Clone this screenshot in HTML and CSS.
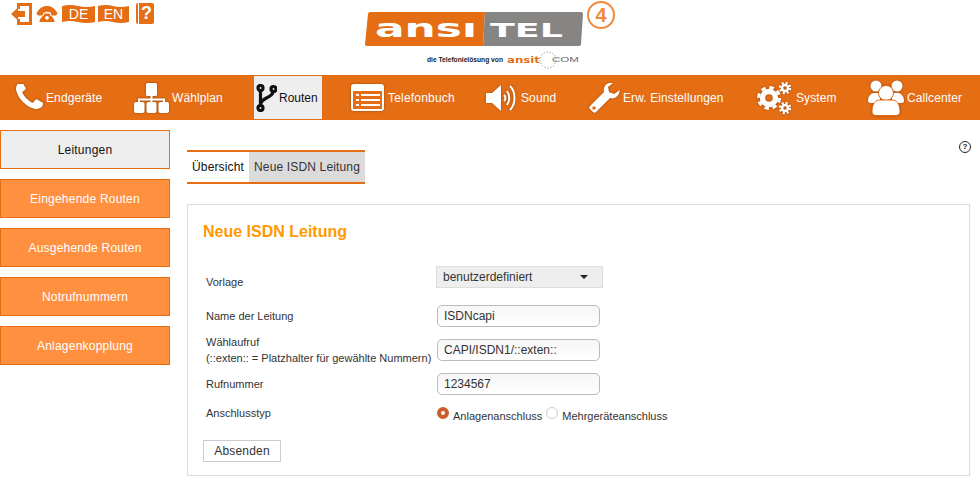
FILE: index.html
```html
<!DOCTYPE html>
<html>
<head>
    <meta charset="utf-8">
    <title>Neue ISDN Leitung</title>
    <link rel="stylesheet" href="styles.css">
</head>
<body>
    <div class="header">
        <div class="quick">
            <svg class="q-exit" viewBox="0 0 21 22"><path d="M6 0h15v22H6v-6h3v3h9V3H9v3H6z"/><path d="M0 11l7-6.500V8h7v6H7v3.500z"/></svg>
            <svg class="q-phone" viewBox="0 0 22 17"><path d="M0 7.500C2.500 2.500 6.500 0 11 0s8.500 2.500 11 7.500c0 1.500-1 2.500-2 2.500h-3.500c-1 0-1.500-1-1.500-3-1-.5-2.500-.8-4-.8S8 7 7 7.500c0 1.500-.5 2.500-1.500 2.500H2C1 10 0 9 0 7.500z"/><path d="M3 17c0-3 2-5.500 5-7.500V8h6v1.500c3 2 5 4.500 5 7.500z"/><circle cx="11" cy="12.500" r="2" fill="#fff"/></svg>
            <span class="flag">DE</span>
            <span class="flag flag-en">EN</span>
            <span class="q-help">?</span>
        </div>
        <svg class="logo" width="255" height="70" viewBox="0 0 255 70">
            <defs><clipPath id="nodot"><rect x="0" y="23" width="120" height="20"/></clipPath></defs>
            <path d="M5 12h115l-2 34H2c-1.500 0-2-1-2-2L3 14c0-1 1-2 2-2z" fill="#e56d14"/>
            <path d="M120 12h96c1.500 0 2 1 2 2l-2 30c0 1-1 2-2 2h-96z" fill="#868584"/>
            <text class="logo-big" x="10" y="37" textLength="102" lengthAdjust="spacingAndGlyphs" clip-path="url(#nodot)">ansi</text>
            <text class="logo-tel" x="125" y="37" textLength="73" lengthAdjust="spacingAndGlyphs">TEL</text>
            <circle cx="236" cy="15" r="13" fill="#fff" stroke="#f08a3c" stroke-width="2"/>
            <text class="logo-four" x="236" y="22" text-anchor="middle">4</text>
            <text class="logo-tag" x="62" y="62" textLength="76" lengthAdjust="spacingAndGlyphs">die Telefonielösung von</text>
            <text class="logo-ansit" x="142" y="63" textLength="33" lengthAdjust="spacingAndGlyphs">ansit</text>
            <text class="logo-com" x="187" y="62" textLength="27" lengthAdjust="spacingAndGlyphs">COM</text>
            <circle cx="183" cy="60" r="8" class="logo-ring"/>
        </svg>
    </div>

    <div class="nav">
        <a class="nav-item">
            <svg class="ico" width="27" height="28" viewBox="192 256 1408 1408"><path d="M1600 1240q0 27-10 70.5t-21 68.5q-21 50-122 106-94 51-186 51-27 0-53-3.5t-57.5-12.5-47-14.5-55.5-20.5-49-18q-98-35-175-83-127-79-264-216t-216-264q-48-77-83-175-3-9-18-49t-20.5-55.5-14.5-47-12.5-57.5-3.5-53q0-92 51-186 56-101 106-122 25-11 68.5-21t70.5-10q14 0 21 3 18 6 53 76 11 19 30 54t35 63.5 31 53.5q3 4 17.5 25t21.5 35.5 7 28.5q0 20-28.5 50t-62 55-62 53-28.5 46q0 9 5 22.5t8.5 20.5 14 24 11.5 19q76 137 174 235t235 174q2 1 19 11.5t24 14 20.5 8.5 22.5 5q18 0 46-28.5t53-62 55-62 50-28.5q14 0 28.5 7t35.5 21.5 25 17.5q25 15 53.5 31t63.5 35 54 30q70 35 76 53 3 7 3 21z"/></svg>
            Endgeräte
        </a>
        <a class="nav-item">
            <svg class="ico" width="35" height="30" viewBox="0 0 35 30"><rect x="12" y="0" width="11" height="13" rx="1.500"/><rect x="0" y="19" width="10.500" height="11" rx="2"/><rect x="12.500" y="19" width="10" height="11" rx="2"/><rect x="24.500" y="19" width="10.500" height="11" rx="2"/><path d="M16.500 13h2v2.500H31V19h-2v-1.500H18.500V19h-2v-1.500H6V19H4v-3.500h12.500z"/></svg>
            Wählplan
        </a>
        <a class="nav-item active">
            <svg class="ico ico-line" width="21" height="28" viewBox="0 0 21 28"><circle cx="4.500" cy="4" r="2.500"/><circle cx="17.500" cy="5" r="2.500"/><circle cx="4.500" cy="24" r="2.500"/><path d="M4.500 6.500v15M17 7.500c0 6.500-11.500 5.500-12.500 13"/></svg>
            Routen
        </a>
        <a class="nav-item wide-text">
            <svg class="ico ico-book" width="33" height="27" viewBox="0 0 33 27"><rect width="33" height="27" rx="3"/><rect x="2" y="7" width="29" height="18" fill="#e56d14"/><rect x="5" y="10" width="3" height="2"/><rect x="5" y="15" width="3" height="2"/><rect x="5" y="20" width="3" height="2"/><rect x="10" y="10" width="19" height="2"/><rect x="10" y="15" width="19" height="2"/><rect x="10" y="20" width="19" height="2"/></svg>
            Telefonbuch
        </a>
        <a class="nav-item">
            <svg class="ico" width="32" height="28" viewBox="0 0 32 28"><path d="M0 9h6l9-8v26l-9-8H0z"/><g fill="none" stroke="#fff" stroke-width="2"><path d="M18 11c2 2 2 4 0 6"/><path d="M21 7c3 4 3 10 0 14"/><path d="M24 2c6 6 6 18 0 24"/></g></svg>
            Sound
        </a>
        <a class="nav-item">
            <svg class="ico" width="31" height="32" viewBox="0 0 31 32"><path d="M20 1c-4 1-6 5-5 9L1 24c-1 1-1 2 0 3l3 3c1 1 2 1 3 0l14-14c4 1 8-1 9-5l1-3-6 4-5-2-1-5 5-4z"/><circle cx="5" cy="26" r="1.800" fill="#e56d14"/></svg>
            Erw. Einstellungen
        </a>
        <a class="nav-item">
            <svg class="ico ico-gears" width="36" height="34" viewBox="0 0 36 34"><circle cx="12" cy="17" r="6.500" stroke-width="5.500"/><circle cx="12" cy="17" r="10.500" stroke-width="3" stroke-dasharray="4.500 3.750"/><circle cx="28" cy="7" r="3" stroke-width="2.500"/><circle cx="28" cy="7" r="5" stroke-width="2.500" stroke-dasharray="2 1.930"/><circle cx="28" cy="27" r="3" stroke-width="2.500"/><circle cx="28" cy="27" r="5" stroke-width="2.500" stroke-dasharray="2 1.930"/></svg>
            System
        </a>
        <a class="nav-item">
            <svg class="ico" width="36" height="36" viewBox="0 0 36 36"><circle cx="8" cy="6" r="5.500"/><circle cx="29" cy="6" r="5.500"/><path d="M0 21c0-5 3-8 6-8h6v10H3c-2 0-3-1-3-2z"/><path d="M36 21c0-5-3-8-6-8h-6v10h9c2 0 3-1 3-2z"/><circle cx="18" cy="13" r="7.500" stroke="#e56d14"/><path d="M4 32c0-9 4-12 8-12h12c4 0 8 3 8 12 0 2-2 3.500-4 3.500H8c-2 0-4-1.500-4-3.500z" stroke="#e56d14"/></svg>
            Callcenter
        </a>
    </div>

    <div class="page">
        <div class="side">
            <a class="side-item current">Leitungen</a>
            <a class="side-item">Eingehende Routen</a>
            <a class="side-item">Ausgehende Routen</a>
            <a class="side-item">Notrufnummern</a>
            <a class="side-item">Anlagenkopplung</a>
        </div>
        <div class="main">
            <div class="main-top">
                <div class="tabs">
                    <a class="tab">Übersicht</a>
                    <a class="tab tab-on">Neue ISDN Leitung</a>
                </div>
                <span class="help">?</span>
            </div>
            <div class="panel">
                <h2>Neue ISDN Leitung</h2>
                <form class="form">
                    <div class="row row-select">
                        <label>Vorlage</label>
                        <div class="select">benutzerdefiniert<i class="caret"></i></div>
                    </div>
                    <div class="row row-gap">
                        <label>Name der Leitung</label>
                        <input type="text" value="ISDNcapi">
                    </div>
                    <div class="row">
                        <label>Wählaufruf<br>(::exten:: = Platzhalter für gewählte Nummern)</label>
                        <input type="text" value="CAPI/ISDN1/::exten::">
                    </div>
                    <div class="row">
                        <label>Rufnummer</label>
                        <input type="text" value="1234567">
                    </div>
                    <div class="row row-radio">
                        <label>Anschlusstyp</label>
                        <div class="radios">
                            <input type="radio" name="typ" checked><span>Anlagenanschluss</span>
                            <input type="radio" name="typ"><span>Mehrgeräteanschluss</span>
                        </div>
                    </div>
                    <button type="button">Absenden</button>
                </form>
            </div>
        </div>
    </div>
</body>
</html>
```

FILE: styles.css
```css
*{box-sizing:border-box;}
html,body{margin:0;padding:0;}
body{font-family:"Liberation Sans",Arial,sans-serif;font-size:12px;color:#333;background:#fff;height:491px;overflow:hidden;}

/* top */
.header{height:75px;display:flex;}
.quick{width:365px;padding:3px 0 0 11px;display:flex;align-items:flex-start;color:#e56d14;}
.quick svg{fill:#e56d14;display:block;}
.q-exit{width:21px;height:22px;}
.q-phone{width:22px;height:16px;margin:3px 0 0 4px;}
.flag{width:33px;height:18px;margin:2px 0 0 4px;background:#e56d14;color:#fff;font-size:14px;line-height:19px;text-align:center;clip-path:path('M0 1Q8 -1 16 1T33 1V17Q25 19 16 17T0 17Z');}
.flag-en{width:31px;margin-left:3px;clip-path:path('M0 1Q8 -1 15 1T31 1V17Q23 19 15 17T0 17Z');}
.q-help{width:18px;height:21px;margin-left:7px;background:linear-gradient(90deg,#e56d14 2px,#fff 2px,#fff 3px,#e56d14 3px);color:#fff;font-size:18px;font-weight:bold;line-height:21px;text-align:center;padding-left:3px;border-radius:2px;}
.logo{display:block;}
.logo-big{font-family:"DejaVu Sans",sans-serif;font-weight:bold;font-size:25px;fill:#fff;}
.logo-tel{font-family:"DejaVu Sans",sans-serif;font-weight:bold;font-size:19px;fill:#fff;}
.logo-four{font-family:"Liberation Sans",sans-serif;font-weight:bold;font-size:20px;fill:#f08a3c;}
.logo-tag{font-family:"Liberation Sans",sans-serif;font-weight:bold;font-size:7px;fill:#222;}
.logo-ansit{font-family:"DejaVu Sans",sans-serif;font-weight:bold;font-size:8px;fill:#e56d14;}
.logo-com{font-family:"Liberation Sans",sans-serif;font-size:7px;fill:#666;}
.logo-ring{fill:none;stroke:#777;stroke-width:1;stroke-dasharray:1 2;}

/* main menu */
.nav{height:45px;background:#e56d14;display:grid;grid-template-columns:118px 122px 95px 135px 103px 168px 111px 1fr;padding-left:14px;}
.nav-item{display:flex;align-items:center;justify-self:start;height:43px;margin-top:1px;padding:0 4px 0 2px;color:#fff;font-size:12px;letter-spacing:.1px;white-space:nowrap;}
.wide-text{letter-spacing:.2px;}
.ico{fill:#fff;display:block;margin-right:3px;flex:none;filter:drop-shadow(0 0 1px rgba(90,50,20,.6));}
.ico-book{margin-right:4px;}
.active{background:#eee;color:#111;letter-spacing:0;}
.active .ico{filter:none;margin-right:2px;}
.ico-line{fill:none;stroke:#111;stroke-width:3.2;}
.ico-gears{fill:none;stroke:#fff;}

/* left menu */
.page{display:flex;}
.side{width:170px;padding-top:10px;display:flex;flex-direction:column;gap:10px;}
.side-item{height:39px;line-height:38px;text-align:center;letter-spacing:.22px;background:#ff9040;border:1px solid #e56d14;color:#fff;}
.side-item.current{background:#eee;color:#111;}

/* content */
.main{width:783px;margin-left:17px;padding-top:21px;}
.main-top{display:flex;justify-content:space-between;align-items:flex-start;}
.tabs{display:flex;height:34px;margin-top:9px;border-top:2px solid #e56d14;border-bottom:2px solid #e56d14;letter-spacing:.15px;}
.tab{padding:0 5px;line-height:30px;color:#111;}
.tab-on{background:#dcdbdb;color:#333;}
.help{width:12px;height:12px;margin-right:-1px;border:1.5px solid #222;border-radius:50%;font-size:8px;font-weight:bold;line-height:9px;text-align:center;color:#222;}
.panel{height:272px;margin-top:20px;padding:17px 15px 0;border:1px solid #ddd;}
h2{margin:0;font-size:16px;line-height:20px;color:#f90;}
.form{margin-top:24px;}
.row{display:flex;align-items:center;height:22px;margin-top:12px;}
.row label{width:233px;padding-left:3px;font-size:11px;line-height:16px;flex:none;white-space:nowrap;}
.row-select{margin-top:0;}
.row-select label{padding-top:10px;}
.row-gap{margin-top:17px;}
.row-radio{height:20px;margin-top:8px;}
.select{width:167px;height:22px;padding-left:6px;background:#eee;border:1px solid #ddd;line-height:20px;position:relative;}
.caret{position:absolute;right:14px;top:8px;border:4px solid transparent;border-top:4px solid #222;border-bottom:0;}
input[type=text]{width:163px;height:22px;margin:0 0 0 1px;padding:0 6px;border:1px solid #bbb;border-radius:5px;background:linear-gradient(#f6f6f6,#fff);font:12px "Liberation Sans",Arial,sans-serif;color:#333;outline:0;}
.radios{display:flex;align-items:center;font-size:11px;padding-left:1px;}
.radios span{padding-top:5px;margin:0 4px 0 4px;}
input[type=radio]{appearance:none;width:12px;height:12px;margin:0;border:1px solid #ccc;border-radius:50%;background:#fff;}
input[type=radio]:checked{background:#fff;border:4px solid #cc5c2c;}
button{display:block;width:78px;height:22px;margin-top:17px;padding:0;background:#fff;border:1px solid #ccc;font:12px "Liberation Sans",Arial,sans-serif;letter-spacing:.2px;color:#333;}
```
